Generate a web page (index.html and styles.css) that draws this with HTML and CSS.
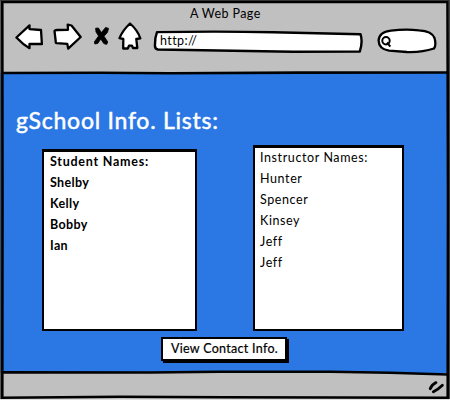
FILE: index.html
```html
<!DOCTYPE html>
<html lang="en">
<head>
<meta charset="utf-8">
<title>A Web Page</title>
<link rel="stylesheet" href="styles.css">
</head>
<body>
<div class="window">
  <header class="chrome">
    <div class="window-title">A Web Page</div>
    <div class="toolbar">
      <svg class="icon back" width="28" height="26" viewBox="0 0 28 26"><path d="M1.4 13.5 14.5 1.4V5.1L26 6 26.9 20H14.5V24.2Q8 20.5 1.4 13.5Z"/></svg>
      <svg class="icon forward" width="29" height="27" viewBox="0 0 29 27"><path d="M1.5 8Q2 7 4 7L15 6.8 14.7 1.6 18.5 2.5 27.7 14 15.2 25.6 14.3 20.9 3.5 20.2Q2.5 20.2 2.7 18Z"/></svg>
      <svg class="stop" width="17" height="20" viewBox="0 0 17 20"><path d="M2.6 2.2 5.4 2 8.4 6.6 12.6 1.4 15.6 2.4 14.4 6.6 11 10.2 14.8 16 13.6 18.4 10.8 17.6 7.8 13 4.8 17.4 1.8 18 1.4 15.8 5.6 10 3 6Z"/></svg>
      <svg class="icon home" width="24" height="28" viewBox="0 0 24 28"><path d="M12 1.5Q19.5 8 22.3 16.3L18.3 17 19.3 26H15L14 23.7H11L9.8 26.5H5.2L5.3 17 1.5 16.2Q4.5 8.5 12 1.5Z"/></svg>
      <div class="address">
        <svg class="shape" width="211" height="24" viewBox="0 0 211 24"><path d="M4 2.1Q65 1.1 120 2.2L207.5 4.2Q210 12 206.8 21.5L140 21.8 5 19.5Q1.5 19 2 14.5 2 7 4 2.1Z"/></svg>
        <span class="url">http://</span>
      </div>
      <svg class="icon search" width="60" height="26" viewBox="0 0 60 26"><path d="M1.6 12.5Q2 4 14 2.6 28 1 42 2.3 55 3 57.5 10 59.5 17 57 20.5 45 24.5 30 24L12 22.6Q1.8 21 1.6 12.5Z"/><circle class="lens" cx="9" cy="12.8" r="3.7"/><path class="lens" d="M10 14.5 13.3 18.6"/></svg>
    </div>
  </header>
  <main class="page">
    <h1>gSchool Info. Lists:</h1>
    <div class="lists">
      <section class="card students">
        <h2>Student Names:</h2>
        <ul><li>Shelby</li><li>Kelly</li><li>Bobby</li><li>Ian</li></ul>
      </section>
      <section class="card instructors">
        <h2>Instructor Names:</h2>
        <ul><li>Hunter</li><li>Spencer</li><li>Kinsey</li><li>Jeff</li><li>Jeff</li></ul>
      </section>
    </div>
    <button class="contact" type="button">View Contact Info.</button>
  </main>
  <footer class="status"></footer>
  <svg class="frame" width="450" height="400" viewBox="0 0 450 400">
    <path class="edge" d="M0 .5H450M.7 0V400M449.5 0V400"/>
    <path class="paper" d="M0 399.5H450"/>
    <path class="line" d="M2.3 2H447.5L448 200 447.7 397.7 225 397.2 120 396.8 2.3 397.8 2.5 200Z"/>
    <path class="line" d="M2 73 100 72.7 170 73.3 300 72.6 448 72.5"/>
    <path class="line" d="M2 372.4 150 372.5 220 371.8 330 371.7 390 372.8 448 374.5"/>
    <path class="grip" d="M430.2 388.8Q431.5 385 436 382.6M433.4 391.8Q438 389.5 442.4 385.2"/>
  </svg>
</div>
</body>
</html>
```
FILE: styles.css
```css
* { box-sizing: border-box; }
body { margin: 0; font-family: Lato, sans-serif; color: #000; }
.window { position: relative; width: 450px; height: 400px; display: flex; flex-direction: column; overflow: hidden; background: #c0c0c0; }
.chrome { height: 73px; }
.window-title { height: 23px; padding: 6px 0 0 190px; font-size: 12.5px; line-height: 16px; letter-spacing: .4px; white-space: nowrap; }
.toolbar { display: flex; align-items: flex-start; padding-left: 15px; }
.toolbar > * { flex: none; }
.icon path { fill: #fff; stroke: #000; stroke-width: 2.3; stroke-linejoin: round; }
.back { margin-top: 1px; }
.forward { margin: 0 0 0 9.5px; }
.stop { margin: 3px 0 0 11.5px; }
.stop path { fill: #000; stroke: #000; stroke-width: .8; stroke-linejoin: round; }
.home { margin: -1px 0 0 8px; }
.address { position: relative; width: 211px; height: 24px; margin: 7px 0 0 11px; padding: 2px 0 0 7px; font-size: 12.5px; line-height: 17px; letter-spacing: .4px; }
.shape { position: absolute; left: 0; top: 0; }
.shape path { fill: #fff; stroke: #000; stroke-width: 2.4; stroke-linejoin: round; }
.url { position: relative; }
.search { margin: 5px 0 0 13px; }
.search .lens { fill: none; stroke: #000; stroke-width: 2; }
.page { height: 300px; background: #2b78e4; padding-left: 16px; }
h1 { margin: 0; padding-top: 33px; height: 72px; color: #fff; font-size: 23px; line-height: 28px; font-weight: 400; letter-spacing: .75px; -webkit-text-stroke: .5px #fff; white-space: nowrap; }
.lists { display: flex; align-items: flex-end; gap: 56px; margin-left: 26px; height: 186px; }
.card { background: #fff; border: 2px solid #000; border-width: 3px 2px 2px 2px; padding-left: 6px; font-size: 12.5px; white-space: nowrap; }
.students { width: 155px; height: 182px; font-weight: 700; letter-spacing: .35px; }
.students h2 { letter-spacing: .75px; }
.instructors { width: 151px; height: 186px; padding-left: 5px; letter-spacing: .6px; }
h2 { margin: -1px 0 0; font: inherit; line-height: 21px; }
ul { list-style: none; margin: 0; padding: 0; }
li { line-height: 21px; }
.contact { display: block; width: 126px; height: 24px; margin: 6px 0 0 145px; padding: 0 0 0 1px; background: #fff; border: 2px solid #000; box-shadow: 2px 2px #000; border-radius: 0; color: #000; font: 12.5px/18px Lato, sans-serif; letter-spacing: .3px; -webkit-text-stroke: .2px #000; white-space: nowrap; }
.status { height: 27px; background: #c0c0c0; }
.frame { position: absolute; inset: 0; fill: none; stroke: #000; }
.line { stroke-width: 2.6; }
.edge { stroke: #444; stroke-width: 1; }
.paper { stroke: #ddd; stroke-width: 1; }
.grip { stroke-width: 2.8; stroke-linecap: round; }
```
